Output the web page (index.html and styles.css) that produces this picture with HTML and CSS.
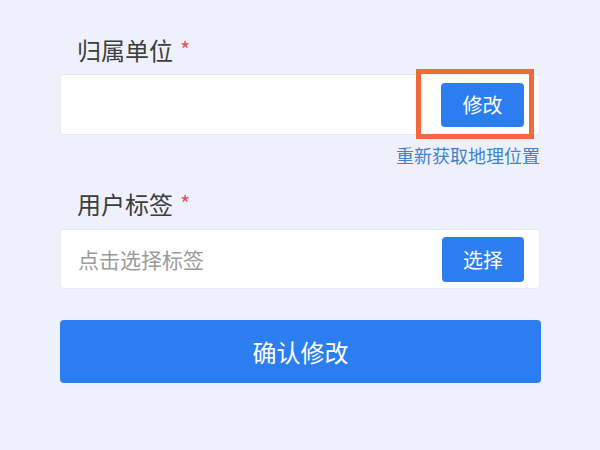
FILE: index.html
```html
<!DOCTYPE html>
<html lang="zh-CN">
<head>
    <meta charset="UTF-8">
    <meta name="viewport" content="width=device-width, initial-scale=1.0">
    <title>修改信息</title>
    <link rel="stylesheet" href="styles.css">
</head>
<body>
    <div class="form">
        <div class="field">
            <div class="label">归属单位<span class="required">*</span></div>
            <div class="input-box">
                <span class="input-text"></span>
                <span class="btn-wrap">
                    <button class="small-btn">修改</button>
                    <span class="highlight"></span>
                </span>
            </div>
            <div class="link-row">
                <a class="link" href="#">重新获取地理位置</a>
            </div>
        </div>

        <div class="field field-tags">
            <div class="label">用户标签<span class="required">*</span></div>
            <div class="input-box input-tags">
                <span class="input-text placeholder">点击选择标签</span>
                <button class="small-btn">选择</button>
            </div>
        </div>

        <button class="submit-btn">确认修改</button>
    </div>
</body>
</html>
```

FILE: styles.css
```css
body {
    margin: 0;
    padding: 0;
    background: #eef1fb;
    font-family: "Noto Sans CJK SC", "Noto Sans", sans-serif;
    color: #333;
}

.form {
    width: 480px;
    margin-left: 60px;
    padding-top: 36px;
}

.label {
    font-size: 24px;
    line-height: 28px;
    color: #3d3d3d;
    padding-left: 17px;
}

.required {
    color: #e8525a;
    font-size: 22px;
    margin-left: 7px;
    vertical-align: top;
    line-height: 24px;
}

.input-box {
    margin-top: 10px;
    height: 61px;
    background: #fff;
    border: 1px solid #e4e9f5;
    box-sizing: border-box;
    border-radius: 4px;
    display: flex;
    align-items: center;
    justify-content: space-between;
    padding: 0 15px 0 17px;
}

.input-text {
    font-size: 21px;
}

.placeholder {
    color: #9b9b9b;
}

.btn-wrap {
    position: relative;
    display: flex;
}

.small-btn {
    width: 83px;
    height: 44px;
    border: none;
    border-radius: 4px;
    background: #2c7ef0;
    color: #fff;
    font-family: inherit;
    font-size: 20px;
    padding: 0;
}

.highlight {
    position: absolute;
    left: -25px;
    right: -10px;
    top: -14px;
    bottom: -12px;
    border: 5px solid #f26a3b;
}

.link-row {
    margin-top: 8px;
    text-align: right;
    line-height: 24px;
}

.link {
    color: #3f82cf;
    font-size: 18px;
    text-decoration: none;
}

.field-tags {
    margin-top: 22px;
}

.input-tags {
    margin-top: 11px;
    height: 60px;
}

.input-tags .small-btn {
    height: 45px;
    width: 82px;
}

.submit-btn {
    display: block;
    width: 481px;
    height: 63px;
    margin-top: 31px;
    border: none;
    border-radius: 4px;
    background: #2c7ef0;
    color: #fff;
    font-family: inherit;
    font-size: 24px;
}
```
